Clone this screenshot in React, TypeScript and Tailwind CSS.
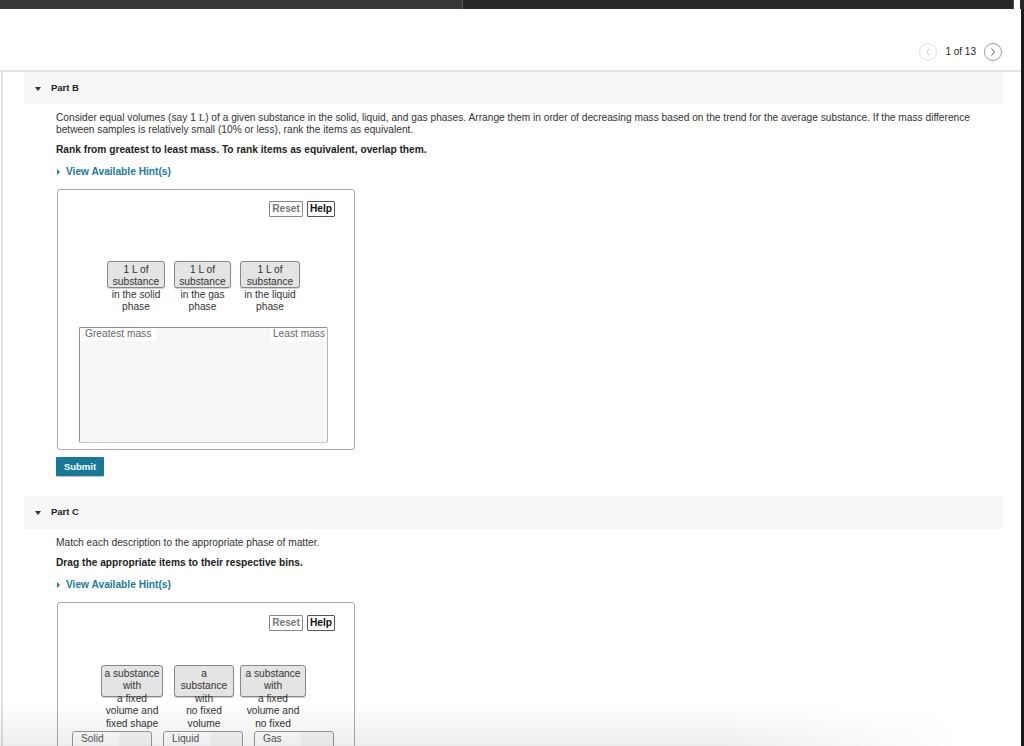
export default function App() {
  return (
    <div className="relative w-[1024px] h-[746px] overflow-hidden bg-white font-['Liberation_Sans',Arial,sans-serif] text-[#333]">
      {/* browser tab strip, cut off */}
      <div className="flex h-[9px]">
        <div className="w-[463px] bg-[#373737] border-r border-[#5a5a5a]" />
        <div className="flex-1 bg-[#262626] border-r border-[#555] mr-[6px]" />
        <div className="w-[4px] bg-[#262626]" />
      </div>

      <div className="flex h-[737px] border-r-[3px] border-[#1a1a1a]">
        <div className="flex-1 flex flex-col">
          {/* pagination */}
          <div className="shrink-0 h-[63px] flex items-end justify-end pb-[9px] pr-[19px] gap-[5px] border-b-2 border-[#e3e3e3]">
            <div className="w-[18px] h-[18px] rounded-full border border-[#e2e2e2] flex items-center justify-center">
              <svg width="6" height="8" viewBox="0 0 6 8" fill="none" stroke="#c8c8c8" strokeWidth="1">
                <path d="M4.5 0.5 L1.5 4 L4.5 7.5" />
              </svg>
            </div>
            <span className="text-[10px] leading-[18px] px-[3px] text-[#222]">1 of 13</span>
            <div className="w-[18px] h-[18px] rounded-full border border-[#9a9a9a] flex items-center justify-center">
              <svg width="6" height="8" viewBox="0 0 6 8" fill="none" stroke="#555" strokeWidth="1">
                <path d="M1.5 0.5 L4.5 4 L1.5 7.5" />
              </svg>
            </div>
          </div>

          <div className="flex-1 border-l-2 border-[#dde3ea] ml-[1px] pl-[21px] pr-[18px]">
            {/* Part B */}
            <PartHeader label="Part B" h="h-[32px]" />
            <div className="pl-[32px] pt-[8px] text-[10.2px] leading-[12px]">
              <p className="text-[#333]">
                Consider equal volumes (say 1 <span className="font-['Liberation_Serif',serif] text-[10.5px]">L</span>) of a given substance in the solid, liquid, and gas phases. Arrange them in order of decreasing mass based on the trend for the average substance. If the mass difference
                <br />
                between samples is relatively small (10% or less), rank the items as equivalent.
              </p>
              <p className="mt-[8px] font-bold text-[#222]">Rank from greatest to least mass. To rank items as equivalent, overlap them.</p>
              <Hint className="mt-[10px]" />

              <div className="mt-[11px] ml-[1px] w-[298px] h-[261px] border border-[#a9a9a9] rounded-[3px] pt-[11px]">
                <ResetHelp />
                <div className="mt-[44px] flex pl-[49px] gap-[9px]">
                  <Card w="w-[58px]" h={27} lines={["1 L of", "substance", "in the solid", "phase"]} />
                  <Card w="w-[57px]" h={27} lines={["1 L of", "substance", "in the gas", "phase"]} />
                  <Card w="w-[60px]" h={27} lines={["1 L of", "substance", "in the liquid", "phase"]} />
                </div>
                <div className="mt-[13px] ml-[21px] w-[249px] h-[116px] bg-[#f7f7f7] border border-[#8f8f8f] border-b-[#c8c8d8] border-r-[#b5b5b5] rounded-[2px] flex justify-between items-start">
                  <span className="bg-white pl-[5px] pr-[4px] h-[13px] w-[76px] leading-[12px] text-[#666]">Greatest mass</span>
                  <span className="bg-white pl-[3px] pr-[2px] h-[13px] leading-[12px] text-[#666]">Least mass</span>
                </div>
              </div>

              <button className="mt-[7px] w-[48px] h-[19px] bg-[#17799a] text-white font-bold text-[9.5px] rounded-[1px] shadow-[0_1px_1px_rgba(0,0,0,0.25)]">
                Submit
              </button>
            </div>

            {/* Part C */}
            <div className="mt-[20px]">
              <PartHeader label="Part C" h="h-[33px]" />
            </div>
            <div className="pl-[32px] pt-[8px] text-[10.2px] leading-[12px]">
              <p className="text-[#333]">Match each description to the appropriate phase of matter.</p>
              <p className="mt-[8px] font-bold text-[#222]">Drag the appropriate items to their respective bins.</p>
              <Hint className="mt-[10px]" />

              <div className="mt-[11px] ml-[1px] w-[298px] h-[160px] border border-[#a9a9a9] rounded-[3px] pt-[12px]">
                <ResetHelp />
                <div className="mt-[34px] flex pl-[43px] h-[66px]">
                  <Card w="w-[62px]" h={32} lines={["a substance", "with", "a fixed", "volume and", "fixed shape"]} />
                  <Card w="w-[60px]" h={32} className="ml-[11px]" lines={["a", "substance", "with", "no fixed", "volume"]} />
                  <Card w="w-[66px]" h={32} className="ml-[6px]" lines={["a substance", "with", "a fixed", "volume and", "no fixed"]} />
                </div>
                <div className="relative z-10 flex pl-[14px] gap-[11px]">
                  <Bin label="Solid" />
                  <Bin label="Liquid" />
                  <Bin label="Gas" />
                </div>
              </div>
            </div>
          </div>
        </div>
      </div>

      {/* soft shadow fading the bottom edge */}
      <div className="pointer-events-none absolute z-20 left-0 bottom-0 w-[960px] h-[42px] bg-gradient-to-b from-transparent to-[#000]/[0.07] [mask-image:linear-gradient(to_right,black_75%,transparent)]" />
    </div>
  );
}

function PartHeader({ label, h }: { label: string; h: string }) {
  return (
    <div className={`${h} bg-[#f6f6f6] flex items-center pl-[11px]`}>
      <span className="w-0 h-0 border-l-[3px] border-r-[3px] border-t-[4px] border-l-transparent border-r-transparent border-t-[#333] mt-[1px]" />
      <span className="ml-[10px] text-[9.5px] font-bold text-[#222]">{label}</span>
    </div>
  );
}

function Hint({ className }: { className: string }) {
  return (
    <div className={`${className} flex items-center text-[#1a7aa1] font-bold`}>
      <span className="w-0 h-0 border-t-[3px] border-b-[3px] border-l-[3px] border-t-transparent border-b-transparent border-l-[#1a7aa1] ml-[1px]" />
      <span className="ml-[6px]">View Available Hint(s)</span>
    </div>
  );
}

function ResetHelp() {
  return (
    <div className="flex justify-end gap-[4px] pr-[19px]">
      <span className="h-[16px] px-[2px] border border-[#8a8a8a] rounded-[1px] text-[#777] font-bold leading-[14px]">Reset</span>
      <span className="h-[16px] px-[2px] border border-[#555] rounded-[1px] text-[#111] font-bold leading-[14px]">Help</span>
    </div>
  );
}

function Card({ w, h, lines, className = "" }: { w: string; h: number; lines: string[]; className?: string }) {
  return (
    <div className={`${w} ${className} shrink-0 flex flex-col items-center`}>
      <div
        className={`${w} shrink-0 bg-[#e4e4e4] border border-[#888] rounded-[3px] shadow-[0_1px_1px_rgba(0,0,0,0.2)]`}
        style={{ height: h }}
      />
      <div
        className="w-[80px] shrink-0 text-center leading-[12.4px] text-[#333] whitespace-nowrap"
        style={{ marginTop: -(h - 3) }}
      >
        {lines.map((t, i) => (
          <div key={i}>{t}</div>
        ))}
      </div>
    </div>
  );
}

function Bin({ label }: { label: string }) {
  return (
    <div className="w-[80px] h-[30px] border border-[#999] rounded-t-[3px] bg-[#f7f7f7]">
      <div className="bg-white w-[46px] h-[15px] pl-[8px] leading-[14px] text-[#555] rounded-tl-[3px]">{label}</div>
    </div>
  );
}
